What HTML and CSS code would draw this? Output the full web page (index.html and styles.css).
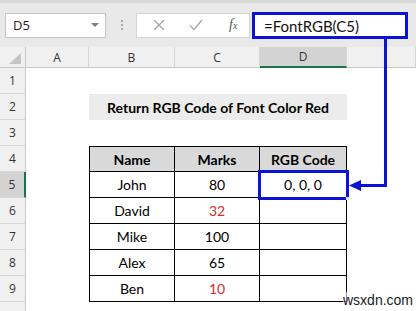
FILE: index.html
```html
<!DOCTYPE html>
<html>
<head>
    <title>FontRGB</title>
    <meta http-equiv="Content-Type" content="text/html;charset=utf-8"/>
    <link rel="stylesheet" href="styles.css">
</head>
<body>
<div class="app">
    <div class="toolbar">
        <div class="namebox">
            <span>D5</span>
            <span class="caret"></span>
        </div>
        <div class="grip"><i></i><i></i><i></i></div>
        <div class="fbuttons">
            <svg width="12" height="12" viewBox="0 0 12 12"><path d="M1 1L11 11M11 1L1 11" stroke="#a6a6a6" stroke-width="1.3" fill="none"/></svg>
            <svg width="14" height="12" viewBox="0 0 14 12"><path d="M1 6.5L5 10.5L13 1" stroke="#a6a6a6" stroke-width="1.3" fill="none"/></svg>
            <span class="fx">f<sub>x</sub></span>
        </div>
        <div class="formula">=FontRGB(C5)</div>
    </div>

    <div class="sheet">
        <div class="row head">
            <div class="corner"></div>
            <div class="ch">A</div>
            <div class="ch">B</div>
            <div class="ch">C</div>
            <div class="ch sel">D</div>
            <div class="ch"></div>
        </div>
        <div class="row">
            <div class="rh">1</div>
            <div></div><div></div><div></div><div></div><div></div>
        </div>
        <div class="row">
            <div class="rh">2</div>
            <div></div>
            <div class="title">Return RGB Code of Font Color Red</div>
            <div></div>
        </div>
        <div class="row">
            <div class="rh">3</div>
            <div></div><div></div><div></div><div></div><div></div>
        </div>
        <div class="row">
            <div class="rh">4</div>
            <div></div>
            <div class="c th first top">Name</div>
            <div class="c th top">Marks</div>
            <div class="c th top">RGB Code</div>
            <div></div>
        </div>
        <div class="row">
            <div class="rh sel">5</div>
            <div></div>
            <div class="c first">John</div>
            <div class="c">80</div>
            <div class="c active">0, 0, 0</div>
            <div></div>
        </div>
        <div class="row">
            <div class="rh">6</div>
            <div></div>
            <div class="c first">David</div>
            <div class="c red">32</div>
            <div class="c"></div>
            <div></div>
        </div>
        <div class="row">
            <div class="rh">7</div>
            <div></div>
            <div class="c first">Mike</div>
            <div class="c">100</div>
            <div class="c"></div>
            <div></div>
        </div>
        <div class="row">
            <div class="rh">8</div>
            <div></div>
            <div class="c first">Alex</div>
            <div class="c">65</div>
            <div class="c"></div>
            <div></div>
        </div>
        <div class="row">
            <div class="rh">9</div>
            <div></div>
            <div class="c first">Ben</div>
            <div class="c red">10</div>
            <div class="c"></div>
            <div></div>
        </div>
        <div class="row">
            <div class="rh"></div>
            <div></div><div></div><div></div><div></div><div></div>
        </div>
    </div>

    <!-- callout from the formula bar to the result cell -->
    <svg class="pointer" width="416" height="311" viewBox="0 0 416 311">
        <path d="M385.5 39V185.5H358" stroke="#0b14d4" stroke-width="3" fill="none"/>
        <path d="M349 185.5L361 180V191Z" fill="#0b14d4"/>
    </svg>

    <div class="mark">wsxdn.com</div>
</div>
</body>
</html>
```

FILE: styles.css
```css
html, body {
    margin: 0;
    padding: 0;
}
body {
    font-family: Lato, "Open Sans", Arial, sans-serif;
    color: #000;
    background-color: #fff;
}
.app {
    position: relative;
    width: 416px;
    height: 311px;
    overflow: hidden;
}

/* formula bar */
.toolbar {
    display: flex;
    align-items: center;
    height: 44px;
    border-top: 3px solid #d9d9d9;
    background-color: #e9e9e9;
    padding-left: 5px;
}
.namebox {
    display: flex;
    align-items: center;
    justify-content: space-between;
    box-sizing: border-box;
    width: 101px;
    height: 25px;
    padding: 0 6px 0 7px;
    background-color: #fff;
    border: 1px solid #c6c6c6;
    font-family: "Open Sans", Arial, sans-serif;
    font-size: 13px;
    color: #222;
}
.caret {
    width: 0;
    height: 0;
    border-left: 4px solid transparent;
    border-right: 4px solid transparent;
    border-top: 4px solid #7d7d7d;
}
.grip {
    display: flex;
    flex-direction: column;
    gap: 2px;
    margin: 0 13px 0 15px;
}
.grip i {
    display: block;
    width: 2px;
    height: 2px;
    background-color: #a9a9a9;
}
.fbuttons {
    display: flex;
    align-items: center;
    box-sizing: border-box;
    width: 114px;
    height: 25px;
    padding-left: 16px;
    gap: 24px;
    background-color: #fff;
    border: 1px solid #d4d4d4;
}
.fx {
    font-family: "Liberation Serif", serif;
    font-style: italic;
    font-size: 14px;
    color: #555;
    margin-left: 2px;
}
.fx sub {
    font-size: 10px;
    vertical-align: 0;
}
.formula {
    box-sizing: border-box;
    width: 156px;
    height: 27px;
    margin-left: 2px;
    padding: 2px 0 0 9px;
    background-color: #fff;
    border: 3px solid #0b14d4;
    font-size: 15px;
    color: #111;
}

/* grid */
.row {
    display: grid;
    grid-template-columns: 26px 63px 86px 85px 87px 69px;
    height: 26px;
}
.row.head {
    height: 21px;
    background-color: #f0f0f0;
    border-bottom: 1px solid #c9c9c9;
    box-sizing: border-box;
}
.corner {
    position: relative;
    border-right: 1px solid #c9c9c9;
}
.corner::after {
    content: "";
    position: absolute;
    right: 4px;
    bottom: 3px;
    width: 12px;
    height: 11px;
    background-color: #c4c4c4;
    clip-path: polygon(100% 0, 100% 100%, 0 100%);
}
.ch {
    display: flex;
    align-items: center;
    justify-content: center;
    border-right: 1px solid #d6d6d6;
    font-family: "Open Sans", Arial, sans-serif;
    font-size: 12px;
    color: #333;
}
.ch.sel {
    background-color: #d3d3d3;
    border-bottom: 2px solid #217346;
    margin-bottom: -1px;
}
.rh {
    display: flex;
    align-items: center;
    justify-content: center;
    box-sizing: border-box;
    background-color: #f0f0f0;
    border-right: 1px solid #c9c9c9;
    border-bottom: 1px solid #d6d6d6;
    font-family: "Open Sans", Arial, sans-serif;
    font-size: 12px;
    color: #333;
}
.rh.sel {
    background-color: #d3d3d3;
    border-right: 2px solid #217346;
}
.title {
    grid-column: span 3;
    display: flex;
    align-items: center;
    justify-content: center;
    background-color: #ececec;
    font-weight: bold;
    font-size: 14px;
}

/* data table */
.c {
    display: flex;
    align-items: center;
    justify-content: center;
    box-sizing: border-box;
    border-right: 1px solid #000;
    border-bottom: 1px solid #000;
    font-size: 14px;
}
.c.first {
    border-left: 1px solid #000;
}
.c.top {
    border-top: 1px solid #000;
}
.c.th {
    background-color: #d9d9d9;
    font-weight: bold;
}
.c.red {
    color: #e0262c;
}
.c.active {
    position: relative;
}
.c.active::before {
    content: "";
    position: absolute;
    left: -2px;
    top: -2px;
    right: -3px;
    bottom: -3px;
    border: 3px solid #0b14d4;
}
.c.active::after {
    content: "";
    position: absolute;
    right: -3px;
    bottom: -3px;
    width: 3px;
    height: 3px;
    background-color: #e0e0e0;
}

.pointer {
    position: absolute;
    left: 0;
    top: 0;
}
.mark {
    position: absolute;
    left: 343px;
    top: 292px;
    font-family: "Liberation Sans", Arial, sans-serif;
    font-size: 14px;
    color: #1a1a1a;
    background-color: rgba(255, 255, 255, 0.6);
    line-height: 16px;
}
```
